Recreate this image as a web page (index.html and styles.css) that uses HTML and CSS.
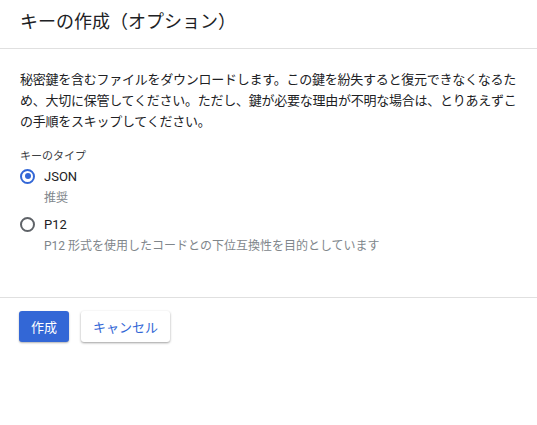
FILE: index.html
```html
<!DOCTYPE html>
<html lang="ja">
<head>
<meta charset="utf-8">
<link rel="stylesheet" href="styles.css">
</head>
<body>
<div class="dialog">
  <header class="head"><h1 class="title">キーの作成（オプション）</h1></header>
  <section class="body">
    <p class="desc">秘密鍵を含むファイルをダウンロードします。この鍵を紛失すると復元できなくなるため、大切に保管してください。ただし、鍵が必要な理由が不明な場合は、とりあえずこの手順をスキップしてください。</p>
    <div class="group">
      <div class="group-label">キーのタイプ</div>
      <div class="option">
        <span class="radio checked"></span>
        <span class="opt-label">JSON</span>
      </div>
      <div class="hint">推奨</div>
      <div class="option">
        <span class="radio"></span>
        <span class="opt-label">P12</span>
      </div>
      <div class="hint">P12 形式を使用したコードとの下位互換性を目的としています</div>
    </div>
  </section>
  <footer class="actions">
    <button class="btn primary">作成</button>
    <button class="btn secondary">キャンセル</button>
  </footer>
</div>
</body>
</html>
```
FILE: styles.css
```css
* { box-sizing: border-box; }
body {
  margin: 0;
  background: #fff;
  font-family: Roboto, "Noto Sans CJK JP", sans-serif;
  color: #202124;
}
.head {
  height: 49px;
  border-bottom: 1px solid #e0e0e0;
  padding: 0 20px 4px 20px;
  display: flex;
  align-items: center;
}
.title {
  margin: 0;
  font-size: 18px;
  line-height: 24px;
  font-weight: 400;
  color: #202124;
}
.body {
  padding: 20px 18px 36px 20px;
  border-bottom: 1px solid #e0e0e0;
}
.desc {
  margin: 0;
  font-size: 13px;
  letter-spacing: -0.25px;
  line-height: 21px;
  color: #202124;
  line-break: anywhere;
}
.group { margin-top: 17px; }
.group-label {
  font-size: 11px;
  line-height: 16px;
  color: #3c4043;
}
.option {
  display: flex;
  align-items: center;
  height: 22px;
}
.radio {
  width: 15px;
  height: 15px;
  border: 2px solid #5f6368;
  border-radius: 50%;
  position: relative;
  flex: none;
}
.radio.checked {
  border-color: #3367d6;
}
.radio.checked::after {
  content: "";
  position: absolute;
  left: 2.5px; top: 2.5px;
  width: 6px; height: 6px;
  border-radius: 50%;
  background: #3367d6;
}
.opt-label {
  margin-left: 9px;
  font-size: 13px;
  font-weight: 400;
  color: #202124;
}
.hint {
  margin-left: 24px;
  font-size: 12px;
  line-height: 22px;
  color: #80868b;
  margin-bottom: 4px;
}
.actions {
  display: flex;
  gap: 12px;
  padding: 13px 19px;
}
.btn {
  height: 31px;
  border: none;
  border-radius: 3px;
  font-family: Roboto, "Noto Sans CJK JP", sans-serif;
  font-size: 13px;
  padding: 0 12px;
  cursor: pointer;
}
.primary {
  background: #3367d6;
  color: #fff;
  width: 50px;
  box-shadow: 0 1px 2px rgba(0,0,0,0.3);
}
.secondary {
  background: #fff;
  color: #3367d6;
  width: 89px;
  box-shadow: 0 1px 2px rgba(0,0,0,0.25), 0 1px 3px rgba(0,0,0,0.15);
}
```
